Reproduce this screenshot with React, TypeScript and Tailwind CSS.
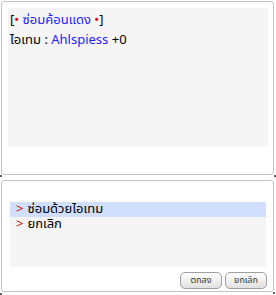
const font = { fontFamily: "Tahoma, 'Noto Sans Thai', 'Liberation Sans', sans-serif" };

function Dot({ className }: { className: string }) {
  return <span className={`absolute h-[2px] w-[2px] bg-[#6b5a5a] ${className}`} />;
}

function Button({ label }: { label: string }) {
  return (
    <button className="flex h-[17px] w-[42px] items-center justify-center rounded-[5px] border border-[#a0a0a0] bg-gradient-to-b from-white to-[#e0e0e0] text-[9px] leading-none text-[#333]">
      {label}
    </button>
  );
}

export default function App() {
  return (
    <div className="relative h-[295px] w-[276px] bg-white pl-px pt-px text-[13px]" style={font}>
      <Dot className="left-0 top-[175px]" />
      <Dot className="right-0 top-[175px]" />
      <Dot className="left-0 top-[293px]" />
      <Dot className="right-[1px] top-[292px]" />

      <div className="h-[174px] w-[273px] rounded-[3px] border border-[#c4c4c4] pl-[6px] pt-[6px]">
        <div className="h-[139px] w-[260px] bg-[#f5f5f5] px-[2px] pt-[2px] leading-[20px]">
          <div>
            <span className="text-black">[</span>
            <span className="text-[#e00000]">•</span>
            <span className="text-[#2222ff]"> ซ่อมค้อนแดง </span>
            <span className="text-[#e00000]">•</span>
            <span className="text-black">]</span>
          </div>
          <div>
            <span className="text-black">ไอเทม : </span>
            <span className="text-[#2222ff]">Ahlspiess</span>
            <span className="text-black"> +0</span>
          </div>
        </div>
      </div>

      <div className="mt-[5px] flex h-[112px] w-[273px] flex-col rounded-[3px] border border-[#c4c4c4] pl-[8px] pr-[6px] pt-[21px]">
        <div className="h-[65px] w-[256px] bg-[#f5f5f5]">
          <div className="flex h-[15px] items-center bg-[#cfdffd] pl-[6px] leading-[15px]">
            <span className="text-[#e00000]">&gt;</span>
            <span className="ml-[4px] text-black">ซ่อมด้วยไอเทม</span>
          </div>
          <div className="flex h-[15px] items-center pl-[6px] leading-[15px]">
            <span className="text-[#e00000]">&gt;</span>
            <span className="ml-[4px] text-black">ยกเลิก</span>
          </div>
        </div>
        <div className="mt-[5px] flex justify-end gap-[3px]">
          <Button label="ตกลง" />
          <Button label="ยกเลิก" />
        </div>
      </div>
    </div>
  );
}
